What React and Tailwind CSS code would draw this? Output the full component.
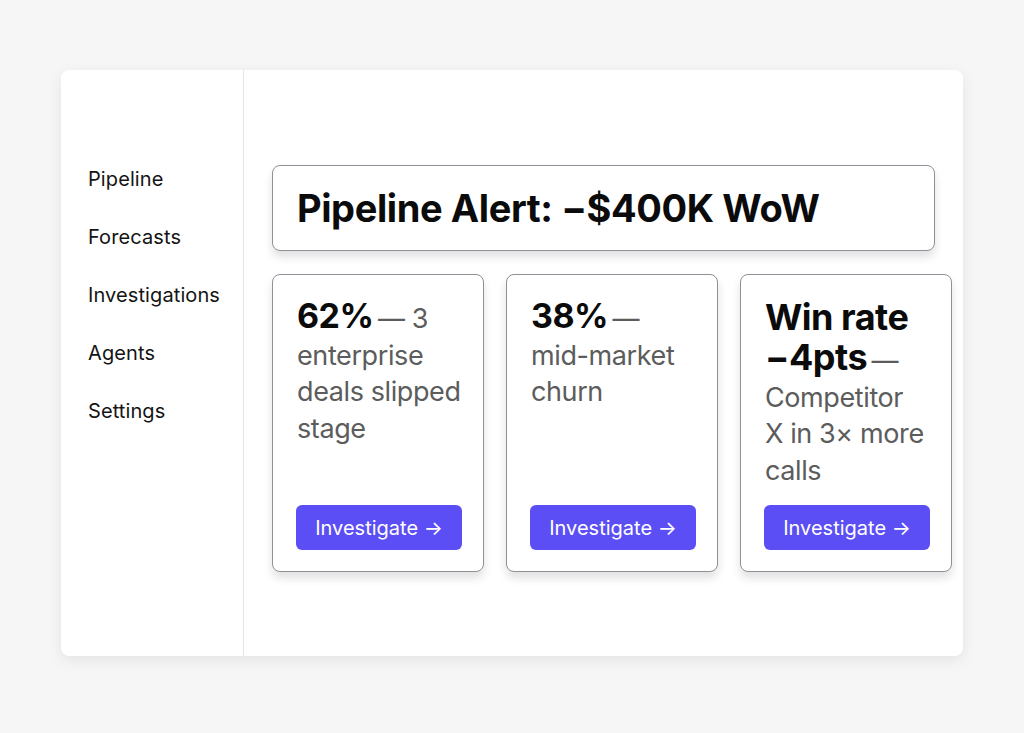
import React from "react";

const navItems = ["Pipeline", "Forecasts", "Investigations", "Agents", "Settings"];

const cards = [
  { bold: "62%", rest: "— 3 enterprise deals slipped stage", big: "text-[34px] leading-[37px]" },
  { bold: "38%", rest: "— mid-market churn", big: "text-[34px] leading-[37px]" },
  { bold: "Win rate −4pts", rest: "— Competitor X\u00a0in 3× more calls", big: "text-[36px] leading-[40px]" },
];

const Card = ({ bold, rest, big }) => (
  <div className="w-[212px] h-[298px] shrink-0 flex flex-col justify-between rounded-lg border border-[#8f9098] bg-white pl-6 pr-[14px] pt-[22px] pb-[21px] shadow-[0_6px_10px_rgba(0,0,0,0.12)]">
    <p className="text-[#5c5c5c]">
      <span className={`${big} font-bold text-[#0b0b0b] tracking-[-0.5px]`}>{bold}</span>{" "}
      <span className="text-[27px] leading-[36.5px] tracking-[-0.4px]">{rest}</span>
    </p>
    <button className="h-[45px] w-[166px] -ml-px rounded-md bg-[#5b4ef4] text-white text-[20px] flex items-center justify-center">
      Investigate →
    </button>
  </div>
);

const App = () => {
  return (
    <div className="min-h-screen w-full bg-[#f6f6f7] pt-[70px] pl-[61px]" style={{ fontFamily: "Inter, 'Noto Sans', sans-serif" }}>
      <div className="w-[902px] h-[586px] flex rounded-lg bg-white shadow-[0_4px_14px_rgba(0,0,0,0.08)]">
        {/* Sidebar */}
        <div className="w-[183px] shrink-0 border-r border-[#e4e4e7] pl-[27px] pt-[97px]">
          <div className="flex flex-col gap-[34px]">
            {navItems.map((item) => (
              <div key={item} className="text-[20px] leading-[24px] text-[#141414] tracking-[0.1px]">
                {item}
              </div>
            ))}
          </div>
        </div>

        {/* Main */}
        <div className="flex-1 min-w-0 pl-[28px] pr-[28px] pt-[95px]">
          <div className="h-[86px] flex items-center rounded-lg border border-[#8f9098] bg-white px-6 shadow-[0_6px_10px_rgba(0,0,0,0.12)]">
            <h1 className="text-[38px] font-bold text-[#0b0b0b] tracking-[-0.4px]">Pipeline Alert: −$400K WoW</h1>
          </div>
          <div className="mt-[23px] flex gap-[22px]">
            {cards.map((c) => (
              <Card key={c.bold} {...c} />
            ))}
          </div>
        </div>
      </div>
    </div>
  );
};

export default App;
